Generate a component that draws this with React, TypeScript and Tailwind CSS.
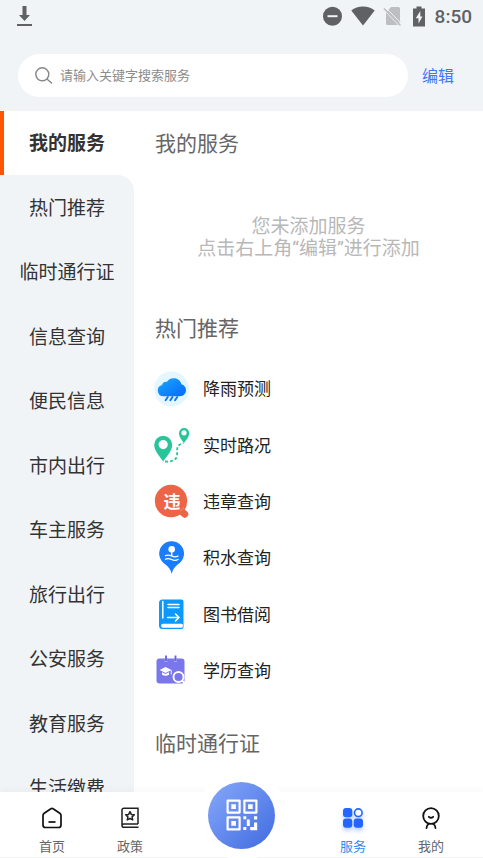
import type { ReactNode } from 'react';

const categories = [
  '我的服务',
  '热门推荐',
  '临时通行证',
  '信息查询',
  '便民信息',
  '市内出行',
  '车主服务',
  '旅行出行',
  '公安服务',
  '教育服务',
  '生活缴费',
];

function StatusBar() {
  return (
    <div className="flex h-8 items-center justify-between pl-4 pr-[11px] text-[#5f6163]">
      <svg width="18" height="22" viewBox="0 0 18 22" fill="currentColor" aria-hidden="true">
        <path d="M6.500 1h4v9H14L8.500 16 3 10h3.500zM1 19h15v2H1z" />
      </svg>
      <div className="flex items-center">
        <svg width="20" height="20" viewBox="0 0 20 20" aria-hidden="true">
          <circle cx="9.500" cy="10.200" r="9.500" fill="currentColor" />
          <path d="M4.500 10.200h10" stroke="#f0f4f7" strokeWidth="2" />
        </svg>
        <svg className="ml-2" width="24" height="20" viewBox="0 0 24 20" fill="currentColor" aria-hidden="true">
          <path d="M12 19.500.3 4.600C3.500 2 7.500.6 12 .6S20.500 2 23.700 4.600z" />
        </svg>
        <svg className="ml-2" width="19" height="20" viewBox="0 0 19 20" aria-hidden="true">
          <path d="M8 1h7.500Q17 1 17 2.500V16L5.500 4zM3 6.500 15 19H4.500Q3 19 3 17.500z" fill="#bcbec1" />
          <path d="M5 4.500 16.500 16.500" stroke="#bcbec1" strokeWidth="3" />
          <path d="m1 2.500 16.500 17" stroke="#bcbec1" strokeWidth="1.500" />
          <path d="m3 1.800 15 15.500" stroke="#f0f4f7" strokeWidth="1" />
        </svg>
        <svg className="ml-2.5" width="14" height="21" viewBox="0 0 14 21" aria-hidden="true">
          <path d="M4.500.5h5v2H13v18H1v-18h3.500z" fill="currentColor" />
          <path d="M8.300 5 3.800 12.200h2.700V17.500l4-7H8.300z" fill="#f0f4f7" />
        </svg>
        <span className="ml-[9px] pt-0.5 text-[19px] font-medium leading-6">8:50</span>
      </div>
    </div>
  );
}

function RainIcon() {
  return (
    <svg width="36" height="36" viewBox="0 0 36 36" aria-hidden="true">
      <defs>
        <linearGradient id="cloud" x1="0" y1="0" x2="1" y2="1">
          <stop stopColor="#18a8ff" />
          <stop offset="1" stopColor="#0868fb" />
        </linearGradient>
      </defs>
      <circle cx="17.500" cy="18" r="17.500" fill="#e4f6ff" />
      <path
        d="M9.500 25.200a5.700 5.700 0 0 1-1.500-11.200c.5-2.600 3-3.800 5-3.200C14.500 8.300 17 7.200 19.700 7.200c4 0 7 2.600 7.700 6 2.800.8 4.600 3 4.600 5.800 0 3.500-2.700 6.200-6.200 6.200z"
        fill="url(#cloud)"
      />
      <path d="m13.800 26-2.200 3.200M18.500 26l-2.200 3.200M23.200 26l-2.200 3.200" stroke="#0878fb" strokeWidth="2" strokeLinecap="round" />
    </svg>
  );
}

function RouteIcon() {
  return (
    <svg width="36" height="36" viewBox="0 0 36 36" aria-hidden="true">
      <path
        fillRule="evenodd"
        d="M9.200 34.500C6.500 30.500.2 24.200.2 17.800a9 9 0 0 1 18 0c0 6.400-6.300 12.700-9 16.700zM9.200 13a4.600 4.600 0 1 0 0 9.200 4.600 4.600 0 0 0 0-9.200z"
        fill="#28c59a"
      />
      <path
        fillRule="evenodd"
        d="M30 16c-1.500-2.300-5-5.800-5-9.800a5.100 5.100 0 0 1 10.200 0c0 4-3.700 7.500-5.200 9.800zM30 3.200a2.600 2.600 0 1 0 0 5.200 2.600 2.600 0 0 0 0-5.200z"
        fill="#28c59a"
      />
      <path
        d="M11 34.500c7 .3 11.500-1.500 12-6 .3-3-.2-5.500.5-8 .8-2.400 2.500-3.500 6-4.500"
        fill="none"
        stroke="#28c59a"
        strokeWidth="1.800"
        strokeDasharray="3 2"
      />
    </svg>
  );
}

function ViolationIcon() {
  return (
    <span className="relative flex size-9 items-center justify-center">
      <svg className="absolute inset-0" width="36" height="36" viewBox="0 0 36 36" aria-hidden="true">
        <circle cx="17" cy="17" r="16.200" fill="#ec6547" />
        <path d="m25 25 5.700 5.200" stroke="#ec6547" strokeWidth="7" strokeLinecap="round" />
        <path d="m26 27 4-3.500" stroke="#fff" strokeWidth="1" opacity=".25" />
      </svg>
      <span className="relative text-[17px] font-bold leading-5 text-white">违</span>
    </span>
  );
}

function FloodIcon() {
  return (
    <svg width="36" height="36" viewBox="0 2 36 36" aria-hidden="true">
      <path d="M17.700 36c-.8-4.500-3.200-7-6.500-9.800A12.400 12.400 0 1 1 24 26.200c-3.300 2.800-5.500 5.300-6.300 9.800z" fill="#1a7cff" />
      <circle cx="17.700" cy="11.300" r="3.300" fill="#fff" />
      <path d="M17.700 12v6" stroke="#fff" strokeWidth="1.500" />
      <path
        d="M11 18c2.300-1.500 4.500-1 6.500 0s4.500 1.300 7-.3M11 21.500c2.300-1.500 4.500-1 6.500 0s4.500 1.300 7-.3"
        fill="none"
        stroke="#fff"
        strokeWidth="1.200"
      />
    </svg>
  );
}

function BookIcon() {
  return (
    <svg width="36" height="36" viewBox="0 0 36 36" aria-hidden="true">
      <path d="M8.500 3.500H27.500a2 2 0 0 1 2 2V31a2 2 0 0 1-2 2H8.500A3.500 3.500 0 0 1 5 29.500V7a3.500 3.500 0 0 1 3.500-3.500z" fill="#0d98fb" />
      <path d="M8.800 5.500V22M14 8.500h11M14 11.500h11M13.500 21.500h11.500M21.500 18l3.500 3.500-3.500 3.500" fill="none" stroke="#fff" strokeWidth="1.500" strokeLinecap="round" />
      <path d="M9 27.700h18.500q1.500 0 1.500 2t-1.500 2H9a2 2 0 0 1 0-4z" fill="#fff" />
    </svg>
  );
}

function DegreeIcon() {
  return (
    <svg width="36" height="36" viewBox="0 1 36 36" aria-hidden="true">
      <rect x="2.500" y="6.500" width="28" height="25" rx="3" fill="#7a76ec" />
      <path d="M12 6v4M21.500 6v4" stroke="#b0adf8" strokeWidth="2.600" />
      <path d="M12 3.500V9M21.500 3.500V9" stroke="#6662dd" strokeWidth="1.800" />
      <path d="m11.500 15 6 3-6 3-5.800-3z" fill="#fff" />
      <path d="M8 20.200v2.500c2.200 1.500 4.800 1.500 7 0v-2.500l-3.500 1.800zM16.800 18h.9v4.500h-.9z" fill="#fff" />
      <circle cx="24.500" cy="25" r="5" fill="#7a76ec" stroke="#fff" strokeWidth="1.900" />
      <path d="m28 28.500 2.500 2.500" stroke="#fff" strokeWidth="2" />
    </svg>
  );
}

const services: { name: string; icon: ReactNode }[] = [
  { name: '降雨预测', icon: <RainIcon /> },
  { name: '实时路况', icon: <RouteIcon /> },
  { name: '违章查询', icon: <ViolationIcon /> },
  { name: '积水查询', icon: <FloodIcon /> },
  { name: '图书借阅', icon: <BookIcon /> },
  { name: '学历查询', icon: <DegreeIcon /> },
];

function SectionTitle({ children }: { children: ReactNode }) {
  return <h2 className="flex h-[65px] items-center px-[21px] pt-0.5 text-[21px] text-[#666]">{children}</h2>;
}

function Tab({ label, active, children }: { label: string; active?: boolean; children: ReactNode }) {
  return (
    <button type="button" className="flex w-[78px] flex-col items-center gap-[5px] pt-3">
      {children}
      <span className={active ? 'text-[13px] leading-5 text-[#2b8cf0]' : 'text-[13px] leading-5 text-[#666]'}>{label}</span>
    </button>
  );
}

function QrIcon() {
  return (
    <svg width="32" height="32" viewBox="0 0 32 32" aria-hidden="true">
      <g fill="none" stroke="#fff" strokeWidth="2.200" strokeLinejoin="round">
        <rect x="1.600" y="1.600" width="12" height="12" />
        <rect x="18.400" y="1.600" width="12" height="12" />
        <rect x="1.600" y="18.400" width="12" height="12" />
      </g>
      <path
        fill="#fff"
        d="M5.300 5.300h4.600v4.600H5.300zM22.100 5.300h4.600v4.600h-4.600zM5.300 22.100h4.600v4.600H5.300zM17.300 17.300h3v3h-3zM28 17.300h3.200v3.200H28zM20.800 20.500h3v6.500h-3zM17.300 28h3v3h-3zM28 23.500h3.200v7.700h-7v-3.200H28z"
      />
    </svg>
  );
}

function BottomBar() {
  return (
    <nav className="relative flex h-[66px] shrink-0 border-b border-[#f3f3f3] bg-white px-[13px] shadow-[0_-1px_8px_rgba(0,0,0,0.04)]">
      <Tab label="首页">
        <svg width="28" height="28" viewBox="0 0 28 28" fill="none" stroke="#111" strokeWidth="1.700" aria-hidden="true">
          <path d="M12.900 4.700 6.200 9.200Q5 10 5 11.400V21Q5 23.500 7.500 23.500h13q2.500 0 2.500-2.500v-9.600q0-1.400-1.200-2.200L15.100 4.700q-1.100-.8-2.200 0z" />
          <path d="M10.500 18h7" />
        </svg>
      </Tab>
      <Tab label="政策">
        <svg width="28" height="28" viewBox="0 0 28 28" fill="none" stroke="#222" strokeWidth="1.500" aria-hidden="true">
          <path d="M22 20V4.200H8Q6 4.200 6 6.200V21.500q0 1.800 2 1.800h14.500M6 21.600q0-1.600 2-1.600h14" />
          <path d="m14 7.700 1.300 2.700 3 .4-2.200 2.100.6 3-2.700-1.400-2.700 1.400.6-3-2.200-2.100 3-.4z" strokeLinejoin="round" />
        </svg>
      </Tab>
      <div className="relative flex-1">
        <div className="absolute -top-[22px] left-1/2 flex size-[90px] -translate-x-1/2 items-center justify-center rounded-full bg-white">
          <button
            type="button"
            aria-label="二维码"
            className="flex size-[67px] items-center justify-center rounded-full bg-linear-to-br from-[#87a8fa] to-[#416ae0]"
          >
            <QrIcon />
          </button>
        </div>
      </div>
      <Tab label="服务" active>
        <svg className="drop-shadow-[0_3px_2px_rgba(40,100,255,0.3)]" width="28" height="28" viewBox="0 0 28 28" fill="#2266ff" aria-hidden="true">
          <rect x="4" y="4" width="9.300" height="9.300" rx="3" />
          <rect x="4" y="14.500" width="9.300" height="9.300" rx="3" />
          <rect x="14.700" y="14.500" width="9.300" height="9.300" rx="3" />
          <circle cx="19.300" cy="8.700" r="3.800" fill="#fff" stroke="#2266ff" strokeWidth="1.600" />
        </svg>
      </Tab>
      <Tab label="我的">
        <svg width="28" height="28" viewBox="0 0 28 28" fill="none" stroke="#111" strokeWidth="1.800" strokeLinecap="round" aria-hidden="true">
          <circle cx="14" cy="12" r="7.800" />
          <path d="M11.800 12.800q2.200 2 4.400 0M9.500 24q.2-3 2.500-4.200M18.500 24q-.2-3-2.500-4.200" />
        </svg>
      </Tab>
    </nav>
  );
}

export default function App() {
  return (
    <div className="flex h-screen flex-col overflow-hidden bg-white font-['Roboto','Noto_Sans_CJK_SC',sans-serif]">
      <header className="h-[111px] shrink-0 bg-[#f0f4f7]">
        <StatusBar />
        <div className="mt-[22px] flex items-center pl-[18px] pr-[29px]">
          <label className="flex h-[43px] flex-1 items-center rounded-full bg-white pl-4">
            <svg width="20" height="20" viewBox="0 0 20 20" fill="none" stroke="#888" strokeWidth="1.400" aria-hidden="true">
              <circle cx="8.300" cy="8.300" r="6.500" />
              <path d="m13 13 5 4.500" />
            </svg>
            <input
              type="search"
              aria-label="搜索服务"
              placeholder="请输入关键字搜索服务"
              className="ml-1.5 min-w-0 flex-1 bg-transparent text-[13px] outline-none placeholder:text-[#8c8c8c]"
            />
          </label>
          <button type="button" className="ml-3.5 pt-0.5 text-base text-[#3f78f5]">
            编辑
          </button>
        </div>
      </header>

      <div className="flex min-h-0 flex-1">
        <aside className="w-[134px] shrink-0 overflow-x-hidden overflow-y-auto [scrollbar-width:none]">
          <div className="grid h-[709px] auto-rows-fr">
            {categories.map((name, i) => (
              <button
                key={name}
                type="button"
                className={
                  i === 0
                    ? 'border-l-4 border-[#ff5500] bg-white pr-1 pt-[3px] text-[19px] font-bold text-[#333]'
                    : i === 1
                      ? 'rounded-tr-2xl bg-[#f0f4f7] pt-[3px] text-[19px] text-[#333]'
                      : 'bg-[#f0f4f7] pt-[3px] text-[19px] text-[#333]'
                }
              >
                {name}
              </button>
            ))}
          </div>
        </aside>

        <main className="min-w-0 flex-1 overflow-x-hidden overflow-y-auto [scrollbar-width:none]">
          <SectionTitle>我的服务</SectionTitle>
          <p className="flex h-[120px] flex-col items-center justify-center pt-[3px] text-[19px] leading-[22px] text-[#b8b8b8]">
            <span>您未添加服务</span>
            <span>点击右上角“编辑”进行添加</span>
          </p>
          <SectionTitle>热门推荐</SectionTitle>
          <ul className="mb-3 grid h-[338px] auto-rows-fr">
            {services.map((service) => (
              <li key={service.name} className="flex">
                <button type="button" className="flex flex-1 items-center gap-[13px] pl-5 text-[17px] text-[#222]">
                  {service.icon}
                  <span className="pt-0.5">{service.name}</span>
                </button>
              </li>
            ))}
          </ul>
          <SectionTitle>临时通行证</SectionTitle>
        </main>
      </div>

      <BottomBar />
    </div>
  );
}
